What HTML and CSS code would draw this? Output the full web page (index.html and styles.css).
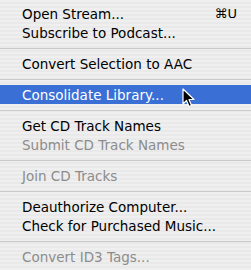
FILE: index.html
```html
<!DOCTYPE html>
<html lang="en">

<head>
    <meta charset="UTF-8">
    <meta name="viewport" content="width=device-width, initial-scale=1.0">
    <title>Advanced Menu</title>
    <link rel="stylesheet" href="styles.css">
</head>

<body>
    <div class="menu">
        <div class="menu-item">
            <span>Open Stream...</span>
            <span class="shortcut">&#8984;U</span>
        </div>
        <div class="menu-item">Subscribe to Podcast...</div>
        <div class="separator"></div>
        <div class="menu-item">Convert Selection to AAC</div>
        <div class="separator"></div>
        <div class="menu-item selected">
            <span>Consolidate Library...</span>
            <svg class="cursor" width="14" height="22" viewBox="0 0 14 22">
                <path d="M1 1 L1 16 L4.5 12.5 L7 18.5 L9.5 17.5 L7 11.5 L12 11.5 Z" fill="black" stroke="white" stroke-width="1.2" stroke-linejoin="round"/>
            </svg>
        </div>
        <div class="separator"></div>
        <div class="menu-item">Get CD Track Names</div>
        <div class="menu-item disabled">Submit CD Track Names</div>
        <div class="separator"></div>
        <div class="menu-item disabled">Join CD Tracks</div>
        <div class="separator"></div>
        <div class="menu-item">Deauthorize Computer...</div>
        <div class="menu-item">Check for Purchased Music...</div>
        <div class="separator"></div>
        <div class="menu-item disabled">Convert ID3 Tags...</div>
    </div>
</body>
</html>
```

FILE: styles.css
```css
* {
    margin: 0;
    padding: 0;
    box-sizing: border-box;
}

body {
    background-color: #ededed;
    font-family: "DejaVu Sans", sans-serif;
    overflow: hidden;
}

.menu {
    display: flex;
    flex-direction: column;
    padding-top: 4px;
    min-height: 270px;
    background-image: repeating-linear-gradient(to bottom, #efefef 0, #efefef 2px, #e9e9e9 2px, #e9e9e9 4px);
}

.menu-item {
    height: 19px;
    display: flex;
    align-items: center;
    justify-content: space-between;
    padding: 0 14px 0 22px;
    font-size: 13.5px;
    color: #000;
    position: relative;
}

.menu-item.disabled {
    color: #8c8c8c;
}

.menu-item.selected {
    background-color: #3a6fd5;
    color: white;
}

.shortcut {
    font-size: 13px;
}

.separator {
    height: 12px;
    display: flex;
    align-items: center;
}

.separator::after {
    content: "";
    flex: 1;
    height: 1px;
    background-color: #cacaca;
}

.cursor {
    position: absolute;
    left: 182px;
    top: 3px;
}
```
